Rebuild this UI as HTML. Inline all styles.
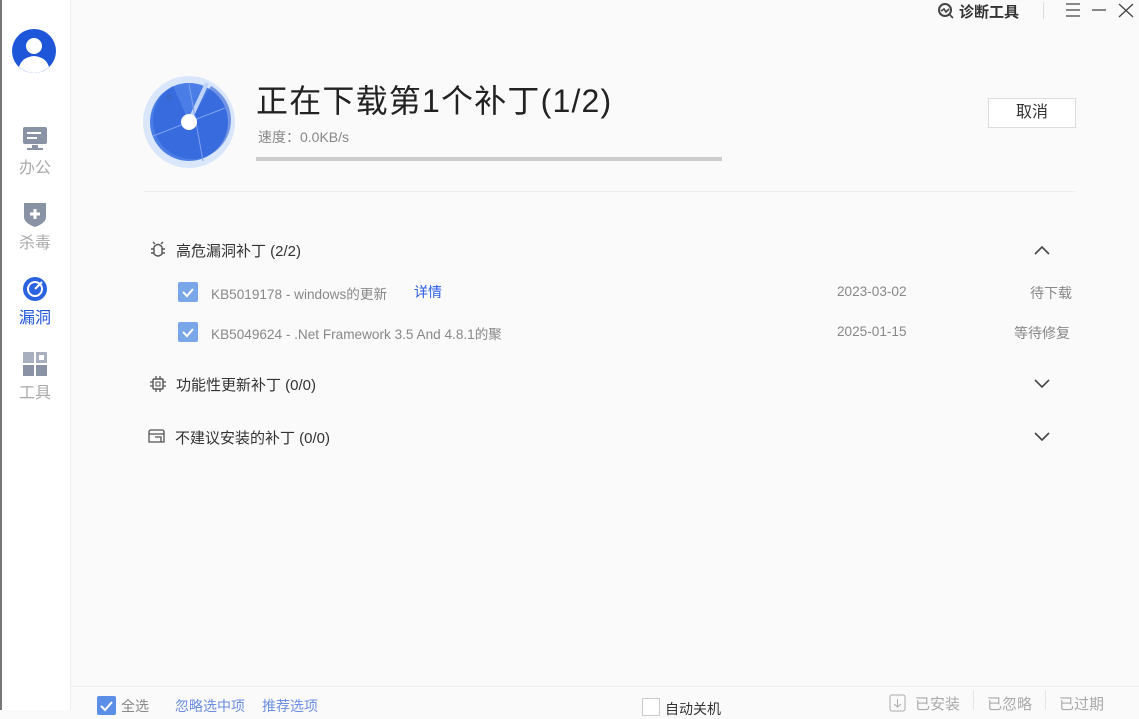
<!DOCTYPE html>
<html><head><meta charset="utf-8"><style>
*{margin:0;padding:0;box-sizing:border-box}
body{width:1139px;height:710px;overflow:hidden;background:#fafafa;font-family:"Liberation Sans","Noto Sans CJK SC",sans-serif;position:relative;color:#333}
.abs{position:absolute}
.side{left:0;top:0;width:71px;height:710px;background:#fff;border-right:1px solid #eee;border-left:2px solid #777}
.nav{position:absolute;left:2px;width:62px;text-align:center;font-size:16px;color:#aaa}
.t{font-size:15px;color:#333}
.g{font-size:13.6px;color:#888}
.cb{width:20px;height:20px;background:#7aa7ea;border-radius:2px}
</style></head><body>
<div class="abs side">
 <svg class="abs" style="left:10px;top:29px" width="44" height="44"><circle cx="22" cy="22" r="22" fill="#1d56d8"/><circle cx="22" cy="17" r="8" fill="#fff"/><path d="M7 38 Q10 28 22 27 Q34 28 37 38 Q30 44 22 44 Q14 44 7 38Z" fill="#fff"/></svg>
 <div class="nav" style="top:126px"><svg width="26" height="26"><rect x="1" y="1" width="24" height="17" rx="2" fill="#8a93a6"/><rect x="5" y="6" width="14" height="2" fill="#fff"/><rect x="5" y="11" width="10" height="2" fill="#fff"/><rect x="10" y="19" width="6" height="3" fill="#8a93a6"/><rect x="5" y="22" width="16" height="2" fill="#8a93a6"/></svg><div style="margin-top:-3px">办公</div></div>
 <div class="nav" style="top:201px"><svg width="26" height="26"><path d="M2 2 H24 V16 Q24 22 13 26 Q2 22 2 16Z" fill="#8a93a6"/><path d="M13 8 V18 M8 13 H18" stroke="#fff" stroke-width="3"/></svg><div style="margin-top:-3px">杀毒</div></div>
 <div class="nav" style="top:276px;color:#1d56d8"><svg width="26" height="26"><circle cx="13" cy="13" r="12" fill="#2a62e0"/><circle cx="13" cy="13" r="7" fill="none" stroke="#fff" stroke-width="2"/><path d="M13 13 L20 6" stroke="#fff" stroke-width="2"/></svg><div style="margin-top:-3px">漏洞</div></div>
 <div class="nav" style="top:351px"><svg width="26" height="26"><rect x="1" y="1" width="11" height="11" fill="#a8b0c0"/><rect x="14" y="1" width="11" height="11" fill="#a8b0c0"/><rect x="17" y="4" width="5" height="5" fill="#fff"/><rect x="1" y="14" width="11" height="11" fill="#8a93a6"/><rect x="14" y="14" width="11" height="11" fill="#8a93a6"/></svg><div style="margin-top:-3px">工具</div></div>
</div>
<svg class="abs" style="left:938px;top:3px" width="16" height="16"><circle cx="7" cy="7" r="6" fill="none" stroke="#444" stroke-width="2"/><path d="M3 8 L6 6 L8 9 L11 6 M11 11 L15 15" stroke="#444" stroke-width="1.6" fill="none"/></svg>
<div class="abs" style="left:959px;top:1px;font-size:15px;font-weight:bold;color:#333">诊断工具</div>
<div class="abs" style="left:1043px;top:2px;width:1px;height:17px;background:#ddd"></div>
<svg class="abs" style="left:1064px;top:2px" width="75" height="16"><path d="M2 2 H16 M2 8 H16 M2 14 H16 M28 8 H42 M55 2 L69 15 M69 2 L55 15" stroke="#444" stroke-width="1.3"/></svg>
<svg class="abs" style="left:143px;top:76px" width="92" height="92"><circle cx="46" cy="46" r="46" fill="#d9e6fb"/><circle cx="46" cy="46" r="39" fill="#4a7ee6"/><path d="M46 46 L68 10 A39 39 0 1 1 30 10Z" fill="#2d5fd8" opacity=".6"/><path d="M46 46 L64 7" stroke="#bfd3fa" stroke-width="4"/><path d="M10 60 L82 32 M46 8 L60 85" stroke="#7ea2ee" stroke-width="1"/><circle cx="46" cy="46" r="8" fill="#fff"/><circle cx="26" cy="21" r="3" fill="#3a66cc"/></svg>
<div class="abs" style="left:256px;top:76px;font-size:32px;color:#222;letter-spacing:1.2px">正在下载第1个补丁(1/2)</div>
<div class="abs g" style="left:258px;top:127px;font-size:14px">速度：0.0KB/s</div>
<div class="abs" style="left:256px;top:157px;width:466px;height:4px;background:#ccc"></div>
<div class="abs" style="left:988px;top:98px;width:88px;height:30px;border:1px solid #ddd;background:#fff;text-align:center;line-height:28px;font-size:16px">取消</div>
<div class="abs" style="left:143px;top:191px;width:933px;height:1px;background:#eee"></div>
<svg class="abs" style="left:149px;top:241px" width="18" height="18"><path d="M5 6 Q9 1 13 6 V13 Q9 17 5 13Z M2 8 H5 M13 8 H16 M2 12 H5 M13 12 H16 M6 3 L4 1 M12 3 L14 1" stroke="#555" stroke-width="1.4" fill="none"/></svg>
<div class="abs t" style="left:176px;top:240px">高危漏洞补丁 (2/2)</div>
<svg class="abs" style="left:1033px;top:245px" width="18" height="12"><path d="M2 9 L9 2 L16 9" stroke="#444" stroke-width="1.6" fill="none"/></svg>
<div class="abs cb" style="left:178px;top:282px"></div><svg class="abs" style="left:178px;top:282px" width="20" height="20"><path d="M5 10 L9 14 L15 7" stroke="#fff" stroke-width="2" fill="none"/></svg>
<div class="abs g" style="left:211px;top:283px">KB5019178 - windows的更新</div>
<div class="abs" style="left:414px;top:282px;font-size:14px;color:#2a5ce8">详情</div>
<div class="abs g" style="left:837px;top:284px">2023-03-02</div>
<div class="abs g" style="left:1030px;top:283px;font-size:14px">待下载</div>
<div class="abs cb" style="left:178px;top:322px"></div><svg class="abs" style="left:178px;top:322px" width="20" height="20"><path d="M5 10 L9 14 L15 7" stroke="#fff" stroke-width="2" fill="none"/></svg>
<div class="abs g" style="left:211px;top:323px">KB5049624 - .Net Framework 3.5 And 4.8.1的聚</div>
<div class="abs g" style="left:837px;top:324px">2025-01-15</div>
<div class="abs g" style="left:1014px;top:323px;font-size:14px">等待修复</div>
<svg class="abs" style="left:149px;top:375px" width="18" height="18"><rect x="4" y="4" width="10" height="10" rx="1" stroke="#555" stroke-width="1.4" fill="none"/><rect x="7" y="7" width="4" height="4" stroke="#555" fill="none"/><path d="M1 7 H4 M1 11 H4 M14 7 H17 M14 11 H17 M7 1 V4 M11 1 V4 M7 14 V17 M11 14 V17" stroke="#555" stroke-width="1.3"/></svg>
<div class="abs t" style="left:176px;top:374px">功能性更新补丁 (0/0)</div>
<svg class="abs" style="left:1033px;top:377px" width="18" height="12"><path d="M2 3 L9 10 L16 3" stroke="#444" stroke-width="1.6" fill="none"/></svg>
<svg class="abs" style="left:148px;top:428px" width="18" height="16"><path d="M1 14 V4 Q1 2 3 2 H14 Q16 2 16 4 V14 Z M1 6 H16 M7 9 H13 V14" stroke="#555" stroke-width="1.3" fill="none"/></svg>
<div class="abs t" style="left:175px;top:427px">不建议安装的补丁 (0/0)</div>
<svg class="abs" style="left:1033px;top:430px" width="18" height="12"><path d="M2 3 L9 10 L16 3" stroke="#444" stroke-width="1.6" fill="none"/></svg>
<div class="abs" style="left:71px;top:686px;width:1068px;height:1px;background:#eee"></div>
<div class="abs cb" style="left:97px;top:696px;width:19px;height:19px;background:#5b8ee6"></div><svg class="abs" style="left:97px;top:696px" width="20" height="20"><path d="M4 10 L8 14 L15 6" stroke="#fff" stroke-width="2" fill="none"/></svg>
<div class="abs g" style="left:121px;top:696px;font-size:14px">全选</div>
<div class="abs" style="left:175px;top:696px;font-size:14px;color:#6b8ee0">忽略选中项</div>
<div class="abs" style="left:262px;top:696px;font-size:14px;color:#6b8ee0">推荐选项</div>
<div class="abs" style="left:642px;top:698px;width:18px;height:18px;border:1px solid #ccc;background:#fff"></div>
<div class="abs" style="left:665px;top:699px;font-size:14px;color:#333">自动关机</div>
<svg class="abs" style="left:888px;top:692px" width="20" height="20"><rect x="2" y="3" width="15" height="16" rx="2" stroke="#aaa" fill="none"/><path d="M9.5 7 V15 M6 12 L9.5 15 L13 12" stroke="#aaa" fill="none"/></svg>
<div class="abs" style="left:915px;top:693px;font-size:15px;color:#aaa">已安装</div>
<div class="abs" style="left:973px;top:690px;width:1px;height:20px;background:#e5e5e5"></div>
<div class="abs" style="left:987px;top:693px;font-size:15px;color:#aaa">已忽略</div>
<div class="abs" style="left:1045px;top:690px;width:1px;height:20px;background:#e5e5e5"></div>
<div class="abs" style="left:1059px;top:693px;font-size:15px;color:#aaa">已过期</div>
</body></html>
